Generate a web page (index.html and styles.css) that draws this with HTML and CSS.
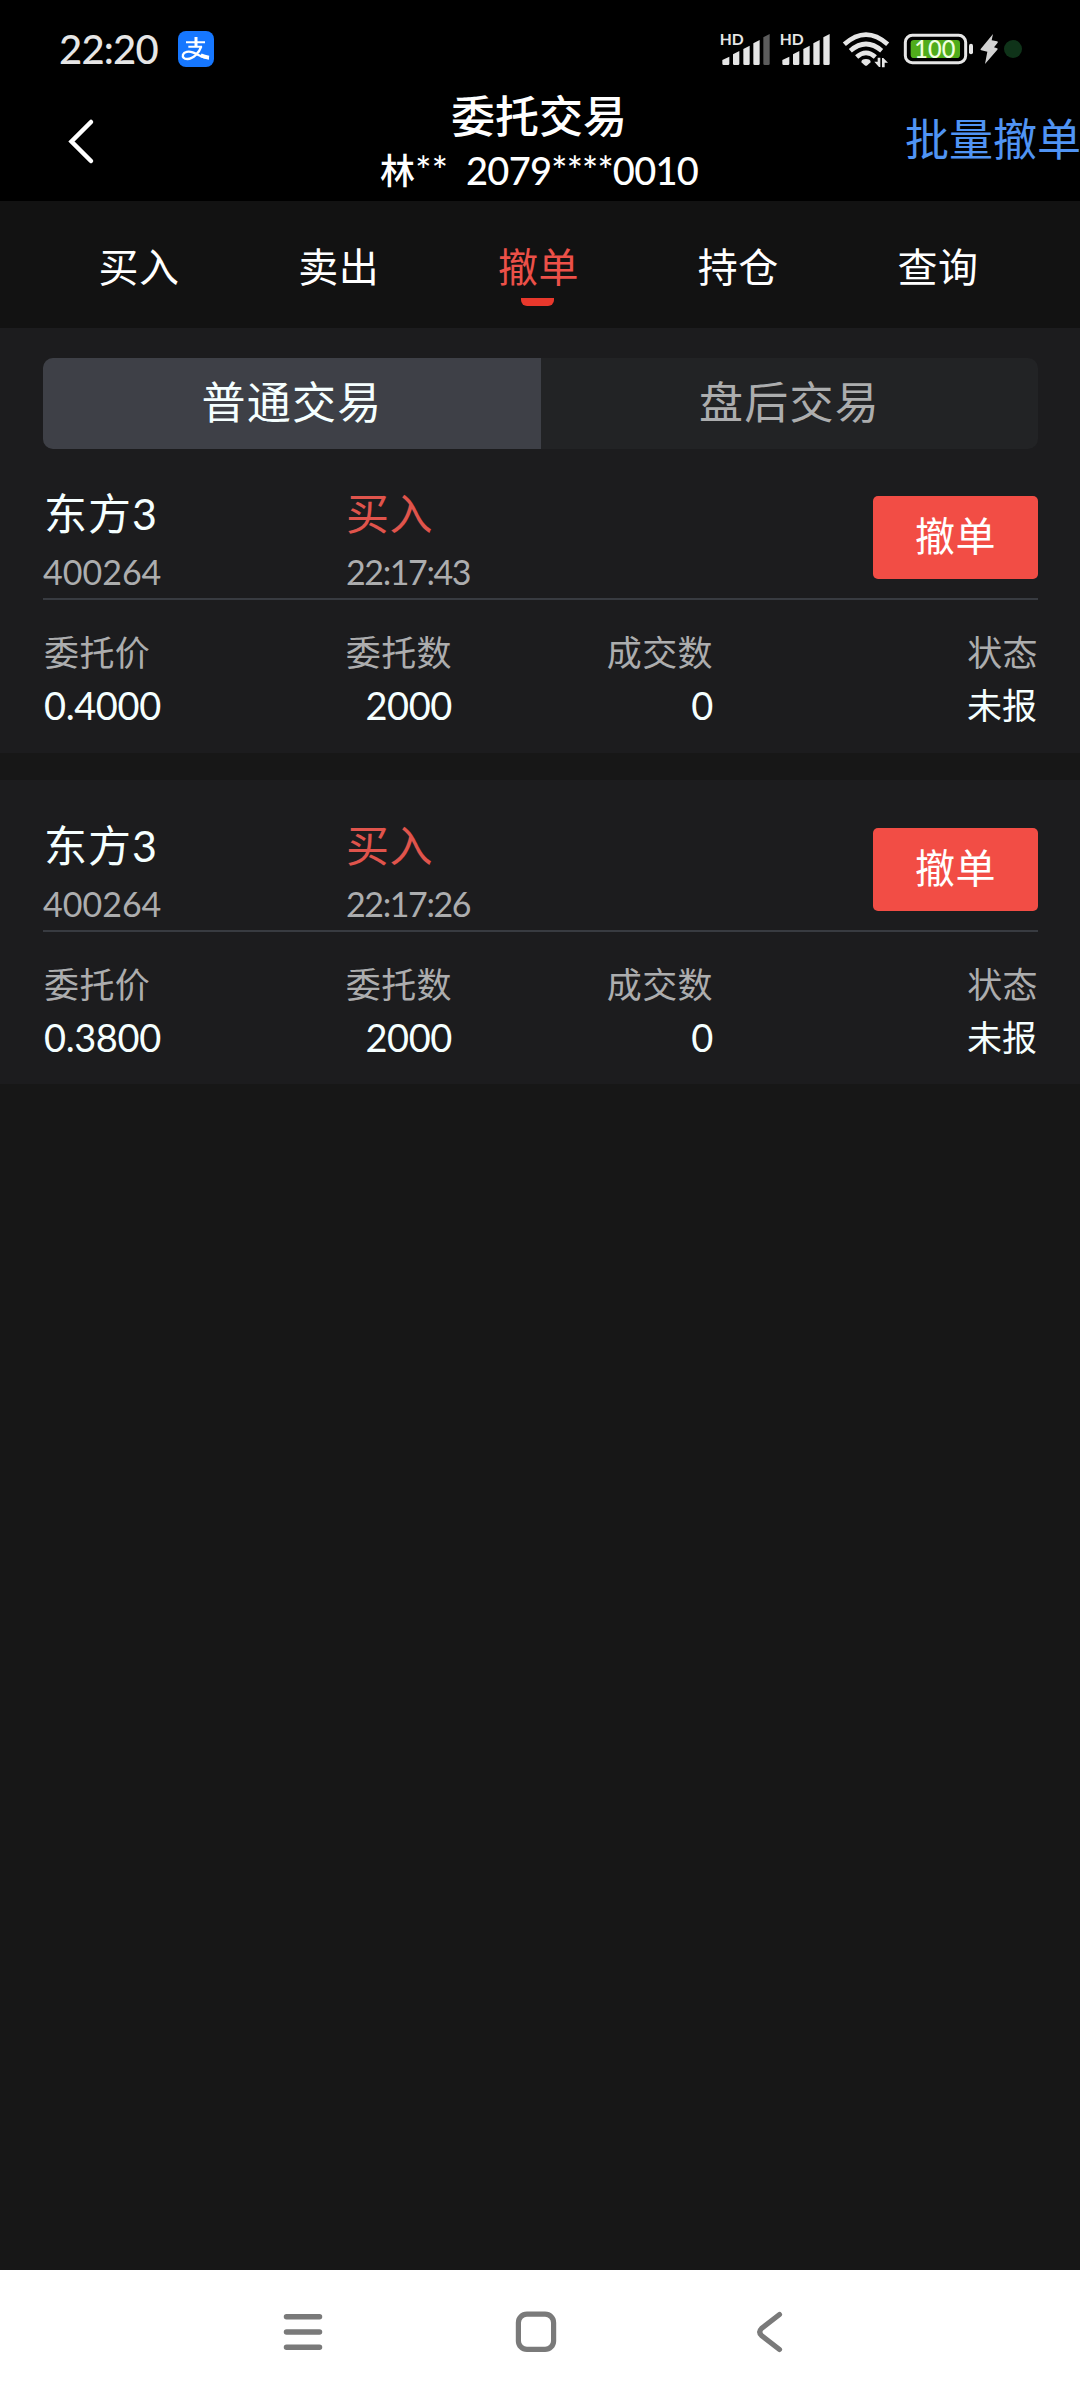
FILE: index.html
```html
<!DOCTYPE html>
<html lang="zh-CN">
<head>
<meta charset="utf-8">
<title>委托交易</title>
<link rel="stylesheet" href="styles.css">
</head>
<body>
<div class="screen">
  <div class="status">
    <span class="clock">22:20</span>
    <svg class="pay" viewBox="0 0 108 108" width="36" height="36">
      <rect width="108" height="108" rx="24" fill="#1677ff"/>
      <g fill="none" stroke="#fff">
        <path d="M24 34H81M31 47.500H72" stroke-width="6"/>
        <path d="M54 18V47" stroke-width="9"/>
        <path d="M70 46C64 64 46 84 28 84C17 84 13 78 15 71C18 62 32 60 44 64C60 70 72 80 93 81" stroke-width="7"/>
        <path d="M68 73C76 77 84 79 93 80" stroke-width="12"/>
      </g>
    </svg>
    <div class="indicators">
      <svg viewBox="60 90 180 120" width="60" height="40" fill="#e6e6e6">
        <text class="hd" x="59" y="134" textLength="72" lengthAdjust="spacingAndGlyphs">HD</text>
        <path d="M67 180L88 170V191Q88 195 84 195H71Q67 195 67 191ZM99 163L118 153V191Q118 195 114 195H103Q99 195 99 191ZM130 147L149 137V191Q149 195 145 195H134Q130 195 130 191ZM160 130L179 120V191Q179 195 175 195H164Q160 195 160 191Z"/>
        <path fill="#5c5c5c" d="M190 112L209 102V191Q209 195 205 195H194Q190 195 190 191Z"/>
      </svg>
      <svg viewBox="240 90 180 120" width="60" height="40" fill="#e6e6e6">
        <text class="hd" x="239" y="134" textLength="72" lengthAdjust="spacingAndGlyphs">HD</text>
        <path d="M247 180L268 170V191Q268 195 264 195H251Q247 195 247 191ZM279 163L298 153V191Q298 195 294 195H283Q279 195 279 191ZM310 147L329 137V191Q329 195 325 195H314Q310 195 310 191ZM340 130L359 120V191Q359 195 355 195H344Q340 195 340 191ZM370 112L389 102V191Q389 195 385 195H374Q370 195 370 191Z"/>
      </svg>
      <svg viewBox="420 90 180 120" width="60" height="40">
        <g fill="none" stroke="#e6e6e6" stroke-width="14">
          <path d="M433 133Q498 75 563 133"/>
          <path d="M451 152Q498 112 545 152"/>
          <path d="M470 171Q498 146 526 171"/>
        </g>
        <path fill="#e6e6e6" d="M484 187Q484 177 498 177Q512 177 512 187L502 196Q498 199 494 196Z"/>
        <path fill="#e6e6e6" d="M533 173H541V201H537L523 185H533ZM546 202V174H550L564 188H554V202Z"/>
      </svg>
      <svg viewBox="600 90 231 120" width="77" height="40">
        <rect x="616" y="106" width="181" height="82" rx="21" fill="none" stroke="#e6e6e6" stroke-width="9"/>
        <rect x="632" y="120" width="148" height="54" rx="10" fill="#50ac1b"/>
        <rect x="807" y="131" width="12" height="32" rx="6" fill="#e6e6e6"/>
        <text class="charge" x="643" y="174" textLength="123" lengthAdjust="spacingAndGlyphs">100</text>
      </svg>
      <svg viewBox="831 90 69 120" width="23" height="40">
        <path fill="#d2d2d2" d="M879 102L842 147Q840 150 844 151L862 155L855 192L892 149Q895 146 891 145L882 142L893 128Q895 125 891 124L875 121Z"/>
      </svg>
      <svg viewBox="900 90 69 120" width="23" height="40">
        <circle cx="939" cy="147" r="27" fill="#0f3319"/>
      </svg>
    </div>
  </div>

  <header class="header">
    <svg class="back" viewBox="0 0 28 48" width="28" height="48" fill="none" stroke="#fff" stroke-width="4.500" stroke-linecap="round">
      <path d="M24 5L4.500 24.500L24 44"/>
    </svg>
    <div class="heading">
      <h1 class="title">委托交易</h1>
      <div class="account"><span class="owner">林</span><span class="stars">**</span><span class="number">2079****0010</span></div>
    </div>
    <a class="batch">批量撤单</a>
  </header>

  <nav class="tabs">
    <a class="tab">买入</a>
    <a class="tab">卖出</a>
    <a class="tab tab-active">撤单</a>
    <a class="tab">持仓</a>
    <a class="tab">查询</a>
  </nav>

  <main class="content">
    <section class="panel panel-first">
      <div class="segments">
        <div class="segment segment-active">普通交易</div>
        <div class="segment">盘后交易</div>
      </div>
      <article class="order">
        <div class="order-head">
          <div class="pair"><span class="name">东方3</span><span class="code">400264</span></div>
          <div class="pair"><span class="name side">买入</span><span class="code time">22:17:43</span></div>
          <button class="cancel">撤单</button>
        </div>
        <div class="order-body">
          <span class="label">委托价</span><span class="label">委托数</span><span class="label">成交数</span><span class="label">状态</span>
          <span class="value">0.4000</span><span class="value">2000</span><span class="value">0</span><span class="value state">未报</span>
        </div>
      </article>
    </section>
    <section class="panel">
      <article class="order">
        <div class="order-head">
          <div class="pair"><span class="name">东方3</span><span class="code">400264</span></div>
          <div class="pair"><span class="name side">买入</span><span class="code time">22:17:26</span></div>
          <button class="cancel">撤单</button>
        </div>
        <div class="order-body">
          <span class="label">委托价</span><span class="label">委托数</span><span class="label">成交数</span><span class="label">状态</span>
          <span class="value">0.3800</span><span class="value">2000</span><span class="value">0</span><span class="value state">未报</span>
        </div>
      </article>
    </section>
  </main>

  <footer class="navbar">
    <svg viewBox="0 0 48 48" width="48" height="48" fill="none" stroke="#7a7a7a" stroke-width="5.500" stroke-linecap="round">
      <path d="M7.500 8.700H40.500M7.500 24H40.500M7.500 39.300H40.500"/>
    </svg>
    <svg viewBox="0 0 48 48" width="48" height="48" fill="none" stroke="#7a7a7a" stroke-width="5.200">
      <rect x="6.400" y="6.200" width="35.200" height="35.200" rx="8.500"/>
    </svg>
    <svg viewBox="0 0 48 48" width="48" height="48" fill="none" stroke="#7a7a7a" stroke-width="5.200" stroke-linecap="round">
      <path d="M34.500 6.500L16.500 20.500Q13 24 16.500 27.500L34.500 41.500"/>
    </svg>
  </footer>
</div>
</body>
</html>
```

FILE: styles.css
```css
* { box-sizing: border-box; }

body {
  margin: 0;
  background: #171717;
  color: #f5ffff;
  font-family: Lato, "Noto Sans CJK SC", sans-serif;
}

.screen {
  display: flex;
  flex-direction: column;
  width: 1080px;
  height: 2400px;
  overflow: hidden;
}

/* System status bar */
.status {
  display: flex;
  flex: none;
  height: 80px;
  padding: 0 57px 0 59px;
  background: #000;
}

.clock {
  width: 119px;
  padding-top: 24px;
  color: #e6e6e6;
  font-size: 40px;
  font-weight: 500;
  letter-spacing: -0.800px;
  line-height: 50px;
}

.pay { margin-top: 31px; }

.indicators {
  display: flex;
  margin: 30px 0 0 auto;
}

.hd {
  font-size: 48px;
  font-weight: 700;
}

.charge {
  fill: #f0ffe0;
  font-size: 74px;
  font-weight: 500;
}

/* Page header */
.header {
  display: grid;
  grid-template-columns: 380px 318px 1fr;
  flex: none;
  height: 121px;
  background: #000;
}

.back { margin: 37px 0 0 67px; }

.heading {
  display: flex;
  flex-direction: column;
  color: #fff;
}

.title {
  margin: 9px 0 0;
  font-size: 44px;
  font-weight: 500;
  line-height: 54px;
  text-align: center;
}

.account {
  display: flex;
  font-size: 38px;
  font-weight: 500;
  line-height: 55px;
  white-space: nowrap;
}

.owner {
  width: 36px;
  font-size: 35px;
}

.stars {
  width: 52px;
  letter-spacing: 0.500px;
}

.number { letter-spacing: -0.750px; }

.batch {
  margin-left: 207px;
  color: #5094f4;
  font-size: 44px;
  line-height: 119px;
  white-space: nowrap;
}

/* Trade tabs */
.tabs {
  display: flex;
  flex: none;
  height: 127px;
  padding: 0 42px 0 39px;
  background: #121212;
}

.tab {
  position: relative;
  flex: 1;
  color: #fff;
  font-size: 40px;
  letter-spacing: 0.500px;
  line-height: 132px;
  text-align: center;
}

.tab-active { color: #ec5048; }

.tab-active::after {
  content: "";
  position: absolute;
  top: 97px;
  left: 82px;
  width: 33px;
  height: 8px;
  border-radius: 0 0 6px 6px;
  background: #e8382c;
}

/* Orders */
.content {
  display: flex;
  flex: 1;
  flex-direction: column;
  gap: 27px;
}

.panel {
  height: 304px;
  padding: 1px 42px 0 43px;
  background: #1c1c1e;
}

.panel-first {
  height: 425px;
  padding-top: 30px;
}

.segments {
  display: grid;
  grid-template-columns: 498px 1fr;
  height: 91px;
  overflow: hidden;
  border-radius: 10px;
  background: #222325;
}

.segment {
  color: #acadae;
  font-size: 44px;
  letter-spacing: 1.200px;
  line-height: 89px;
  text-align: center;
}

.segment-active {
  background: #3e4047;
  color: #f5ffff;
}

.order { padding-top: 38px; }

.order-head {
  display: grid;
  grid-template-columns: 302px 1fr 165px;
  height: 113px;
  border-bottom: 2px solid #383b41;
}

.pair {
  display: flex;
  flex-direction: column;
}

.name {
  padding-left: 1px;
  font-size: 43px;
  letter-spacing: 1px;
  line-height: 53px;
}

.side {
  color: #e0544c;
  letter-spacing: 0.500px;
}

.code {
  margin-top: 7px;
  color: #acadae;
  font-size: 34px;
  line-height: 50px;
}

.time {
  padding-left: 1px;
  letter-spacing: -1.400px;
}

.cancel {
  height: 83px;
  margin: 9px 0 0;
  padding: 0 0 7px;
  border: 0;
  border-radius: 5px;
  background: #f24d45;
  color: #fff;
  font: inherit;
  font-size: 40px;
  letter-spacing: 0.500px;
}

.order-body {
  display: grid;
  grid-template-columns: 302px 107px 261px 325px;
  row-gap: 5px;
  padding-top: 29px;
  text-align: right;
}

.label:first-child,
.value:nth-child(5) {
  padding-left: 1px;
  text-align: left;
}

.label {
  color: #acadae;
  font-size: 35px;
  letter-spacing: 0.400px;
  line-height: 46px;
}

.value {
  font-size: 38px;
  letter-spacing: -0.400px;
  line-height: 50px;
}

.state {
  padding-right: 1px;
  font-size: 35px;
  letter-spacing: 0;
}

/* System navigation */
.navbar {
  display: flex;
  flex: none;
  justify-content: center;
  align-items: flex-start;
  gap: 185px;
  height: 130px;
  padding: 38px 8px 0 0;
  background: #fff;
}
```
